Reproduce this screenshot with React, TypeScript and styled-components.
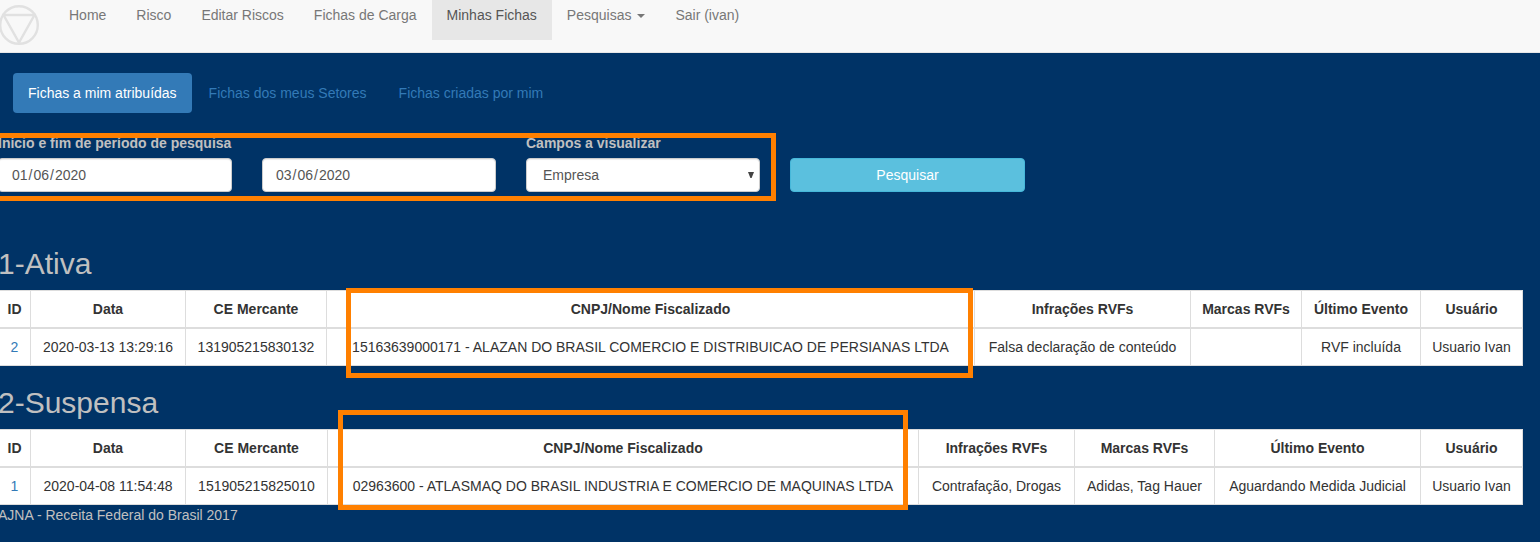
import React from 'react';
import styled, { createGlobalStyle } from 'styled-components';

const GlobalStyle = createGlobalStyle`
  *, *::before, *::after { box-sizing: border-box; }
  body {
    margin: 0;
    background: #003366;
    color: #c0c0c0;
    font-family: "Liberation Sans", Arial, sans-serif;
    font-size: 14px;
    line-height: 20px;
  }
`;

const Page = styled.div`
  position: relative;
  height: 542px;
  overflow: hidden;
`;

const Navbar = styled.nav`
  display: flex;
  align-items: flex-start;
  height: 53px;
  background: #f8f8f8;
  border-bottom: 1px solid #e7e7e7;
`;

const Logo = styled.svg`
  display: block;
  flex: none;
  width: 40px;
  height: 40px;
  margin: 5px 15px 0 -1px;
`;

const NavItem = styled.a<{ $active?: boolean }>`
  display: flex;
  align-items: center;
  height: 40px;
  padding: 5px 15px 15px;
  white-space: nowrap;
  text-decoration: none;
  color: ${(p) => (p.$active ? '#555' : '#777')};
  background: ${(p) => (p.$active ? '#e7e7e7' : 'transparent')};
`;

const Caret = styled.span`
  margin: 2px 0 0 6px;
  border-top: 4px solid currentColor;
  border-left: 4px solid transparent;
  border-right: 4px solid transparent;
`;

const Pills = styled.div`
  display: flex;
  gap: 2px;
  padding: 20px 13px 0;
`;

const Pill = styled.a<{ $active?: boolean }>`
  padding: 10px 15px;
  border-radius: 4px;
  text-decoration: none;
  white-space: nowrap;
  color: ${(p) => (p.$active ? '#fff' : '#337ab7')};
  background: ${(p) => (p.$active ? '#337ab7' : 'transparent')};
`;

const Content = styled.main`
  margin-left: -2px;
`;

const SearchForm = styled.div`
  display: grid;
  grid-template-columns: 234px 234px 234px 235px;
  column-gap: 30px;
  align-items: end;
  padding-top: 20px;
`;

const Field = styled.div`
  display: flex;
  flex-direction: column;
  gap: 5px;
`;

const Label = styled.label`
  font-weight: bold;
  white-space: nowrap;
`;

const Control = styled.div<{ $select?: boolean }>`
  display: flex;
  align-items: center;
  justify-content: space-between;
  height: 34px;
  padding: ${(p) => (p.$select ? '0 4px 0 16px' : '0 12px')};
  border: 1px solid #ccc;
  border-radius: 4px;
  background: #fff;
  color: #555;
  box-shadow: inset 0 1px 1px rgba(0, 0, 0, 0.075);
`;

const DatePart = styled.span`
  padding: 0 1px;
`;

const SelectArrow = styled.svg`
  display: block;
  width: 8px;
  height: 8px;
`;

const SearchButton = styled.button`
  height: 34px;
  border: 1px solid #46b8da;
  border-radius: 4px;
  background: #5bc0de;
  color: #fff;
  font: inherit;
`;

const Section = styled.section<{ $first?: boolean }>`
  padding-top: ${(p) => (p.$first ? '55px' : '20px')};
`;

const Title = styled.h2`
  margin: 0 0 10px;
  font-size: 30px;
  font-weight: 400;
  line-height: 33px;
`;

const Table = styled.table`
  width: 1525px;
  table-layout: fixed;
  border-collapse: separate;
  border-spacing: 0;
  border-top: 1px solid #ddd;
  background: #fff;
  color: #333;
`;

const HeaderCell = styled.th<{ $width: number }>`
  width: ${(p) => p.$width}px;
  height: 38px;
  padding: 0;
  border-right: 1px solid #ddd;
  border-bottom: 2px solid #ddd;
  white-space: nowrap;

  &:first-child {
    padding-left: 1px;
  }
`;

const Cell = styled.td`
  height: 37px;
  padding: 0;
  border-right: 1px solid #ddd;
  border-bottom: 1px solid #ddd;
  text-align: center;
  white-space: nowrap;

  &:first-child {
    padding-left: 1px;
  }
`;

const IdLink = styled.a`
  color: #337ab7;
  text-decoration: none;
`;

const Footer = styled.footer`
  line-height: 20px;
`;

const Highlight = styled.div<{ $x: number; $y: number; $w: number; $h: number }>`
  position: absolute;
  left: ${(p) => p.$x}px;
  top: ${(p) => p.$y}px;
  width: ${(p) => p.$w}px;
  height: ${(p) => p.$h}px;
  border: 5px solid #ff8000;
  pointer-events: none;
`;

const columns = [
  'ID',
  'Data',
  'CE Mercante',
  'CNPJ/Nome Fiscalizado',
  'Infrações RVFs',
  'Marcas RVFs',
  'Último Evento',
  'Usuário',
];

function DateField({ value }: { value: string }) {
  const [day, month, year] = value.split('/');
  return (
    <Control>
      <span>
        <DatePart>{day}</DatePart>/<DatePart>{month}</DatePart>/<DatePart>{year}</DatePart>
      </span>
    </Control>
  );
}

function FichasTable({ widths, row }: { widths: number[]; row: string[] }) {
  return (
    <Table>
      <thead>
        <tr>
          {columns.map((name, i) => (
            <HeaderCell key={name} $width={widths[i]}>{name}</HeaderCell>
          ))}
        </tr>
      </thead>
      <tbody>
        <tr>
          {row.map((value, i) => (
            <Cell key={columns[i]}>{i === 0 ? <IdLink>{value}</IdLink> : value}</Cell>
          ))}
        </tr>
      </tbody>
    </Table>
  );
}

export default function App() {
  return (
    <Page>
      <GlobalStyle />
      <Navbar>
        <Logo viewBox="0 0 40 40" fill="none" stroke="#e1e1e1" strokeWidth="2.4">
          <circle cx="20" cy="20" r="18.8" />
          <path d="M3 10H37M4.5 10L20 37.5L35.5 10" />
        </Logo>
        <NavItem>Home</NavItem>
        <NavItem>Risco</NavItem>
        <NavItem>Editar Riscos</NavItem>
        <NavItem>Fichas de Carga</NavItem>
        <NavItem $active>Minhas Fichas</NavItem>
        <NavItem>Pesquisas<Caret /></NavItem>
        <NavItem>Sair (ivan)</NavItem>
      </Navbar>
      <Pills>
        <Pill $active>Fichas a mim atribuídas</Pill>
        <Pill>Fichas dos meus Setores</Pill>
        <Pill>Fichas criadas por mim</Pill>
      </Pills>
      <Content>
        <SearchForm>
          <Field>
            <Label>Início e fim de período de pesquisa</Label>
            <DateField value="01/06/2020" />
          </Field>
          <DateField value="03/06/2020" />
          <Field>
            <Label>Campos a visualizar</Label>
            <Control $select>
              Empresa
              <SelectArrow viewBox="0 0 8 8" fill="#444">
                <path d="M1 1H7L4.6 7H3.4Z" />
              </SelectArrow>
            </Control>
          </Field>
          <SearchButton>Pesquisar</SearchButton>
        </SearchForm>
        <Section $first>
          <Title>1-Ativa</Title>
          <FichasTable
            widths={[33, 155, 141, 648, 216, 111, 119, 102]}
            row={['2', '2020-03-13 13:29:16', '131905215830132', '15163639000171 - ALAZAN DO BRASIL COMERCIO E DISTRIBUICAO DE PERSIANAS LTDA', 'Falsa declaração de conteúdo', '', 'RVF incluída', 'Usuario Ivan']}
          />
        </Section>
        <Section>
          <Title>2-Suspensa</Title>
          <FichasTable
            widths={[33, 155, 142, 591, 156, 140, 206, 102]}
            row={['1', '2020-04-08 11:54:48', '151905215825010', '02963600 - ATLASMAQ DO BRASIL INDUSTRIA E COMERCIO DE MAQUINAS LTDA', 'Contrafação, Drogas', 'Adidas, Tag Hauer', 'Aguardando Medida Judicial', 'Usuario Ivan']}
          />
        </Section>
        <Footer>AJNA - Receita Federal do Brasil 2017</Footer>
      </Content>
      <Highlight $x={-10} $y={133} $w={786} $h={68} />
      <Highlight $x={346} $y={288} $w={627} $h={90} />
      <Highlight $x={338} $y={410} $w={570} $h={100} />
    </Page>
  );
}
